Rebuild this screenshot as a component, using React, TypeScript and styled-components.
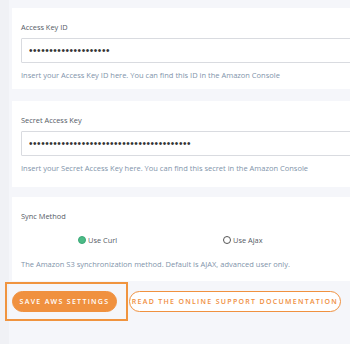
import * as React from 'react'
import styled, { createGlobalStyle } from 'styled-components'

const GlobalStyle = createGlobalStyle`
  html, body {
    margin: 0;
    padding: 0;
    background: #f4f5f9;
    font-family: "Open Sans", "Liberation Sans", sans-serif;
    overflow: hidden;
  }
`;

const Page = styled.div`
  width: 350px;
  height: 344px;
  overflow: hidden;
  padding: 8px 0 0 12px;
  box-sizing: border-box;
  display: flex;
  flex-direction: column;
  background: linear-gradient(to right, #f0f1f5 0, #f0f1f5 9px, #f5f6fa 9px);
`;

const Card = styled.section<{ $height: number; $gap: number }>`
  background: #fff;
  height: ${p => p.$height}px;
  margin-bottom: ${p => p.$gap}px;
  overflow: hidden;
  box-sizing: border-box;
  padding: 14px 0 0 9px;
  display: flex;
  flex-direction: column;
`;

const Label = styled.div`
  font-size: 7.4px;
  color: #555b66;
  line-height: 10px;
`;

const Field = styled.input`
  margin-top: 6px;
  height: 25px;
  width: calc(100% + 10px);
  box-sizing: border-box;
  border: 1px solid #d9dbe0;
  border-radius: 1px;
  padding: 0 7px;
  font-family: "Liberation Sans", sans-serif;
  font-size: 10px;
  letter-spacing: 0.55px;
  color: #333;
  background: #fff;
  outline: none;
`;

const Help = styled.div<{ $top?: number }>`
  margin-top: ${p => p.$top ?? 7}px;
  font-size: 7.5px;
  color: #8194aa;
  line-height: 10px;
  white-space: nowrap;
`;

const Radios = styled.div`
  display: flex;
  margin-top: 14px;
  padding-left: 57px;
  gap: 106px;
  align-items: center;
  height: 10px;
`;

const RadioOpt = styled.label`
  display: flex;
  align-items: center;
  gap: 2px;
  font-size: 7.4px;
  color: #555b66;
`;

const Dot = styled.span<{ $on?: boolean }>`
  width: 8px;
  height: 8px;
  border-radius: 50%;
  box-sizing: border-box;
  border: 1px solid ${p => (p.$on ? '#3aa878' : '#555')};
  background: ${p => (p.$on ? '#4cbb86' : '#fff')};
`;

const Actions = styled.div`
  display: flex;
  align-items: center;
  gap: 1px;
`;

const Highlight = styled.div`
  margin-left: -7px;
  padding: 7px 9px 7px 5px;
  border: 2px solid #f0943f;
  display: flex;
`;

const Button = styled.button<{ $outline?: boolean; $w: number }>`
  height: 21px;
  width: ${p => p.$w}px;
  border-radius: 11px;
  padding: 0;
  font-family: "Open Sans", "Liberation Sans", sans-serif;
  font-size: 7px;
  font-weight: 600;
  letter-spacing: 1.3px;
  text-transform: uppercase;
  cursor: pointer;
  border: 1px solid #f0913f;
  background: ${p => (p.$outline ? '#fff' : '#f0913f')};
  color: ${p => (p.$outline ? '#ef8e3c' : '#fff')};
  white-space: nowrap;
`;

export default function App() {
  return (
    <>
      <GlobalStyle />
      <Page>
        <Card $height={81} $gap={12}>
          <Label>Access Key ID</Label>
          <Field type="password" readOnly value="xxxxxxxxxxxxxxxxxxxx" />
          <Help>Insert your Access Key ID here. You can find this ID in the Amazon Console</Help>
        </Card>
        <Card $height={86} $gap={10}>
          <Label>Secret Access Key</Label>
          <Field type="password" readOnly value="xxxxxxxxxxxxxxxxxxxxxxxxxxxxxxxxxxxxxxxx" />
          <Help>Insert your Secret Access Key here. You can find this secret in the Amazon Console</Help>
        </Card>
        <Card $height={84} $gap={1}>
          <Label>Sync Method</Label>
          <Radios>
            <RadioOpt><Dot $on />Use Curl</RadioOpt>
            <RadioOpt><Dot />Use Ajax</RadioOpt>
          </Radios>
          <Help $top={14}>The Amazon S3 synchronization method. Default is AJAX, advanced user only.</Help>
        </Card>
        <Actions>
          <Highlight>
            <Button $w={105}>Save AWS Settings</Button>
          </Highlight>
          <Button $outline $w={212}>Read the online support documentation</Button>
        </Actions>
      </Page>
    </>
  );
}
